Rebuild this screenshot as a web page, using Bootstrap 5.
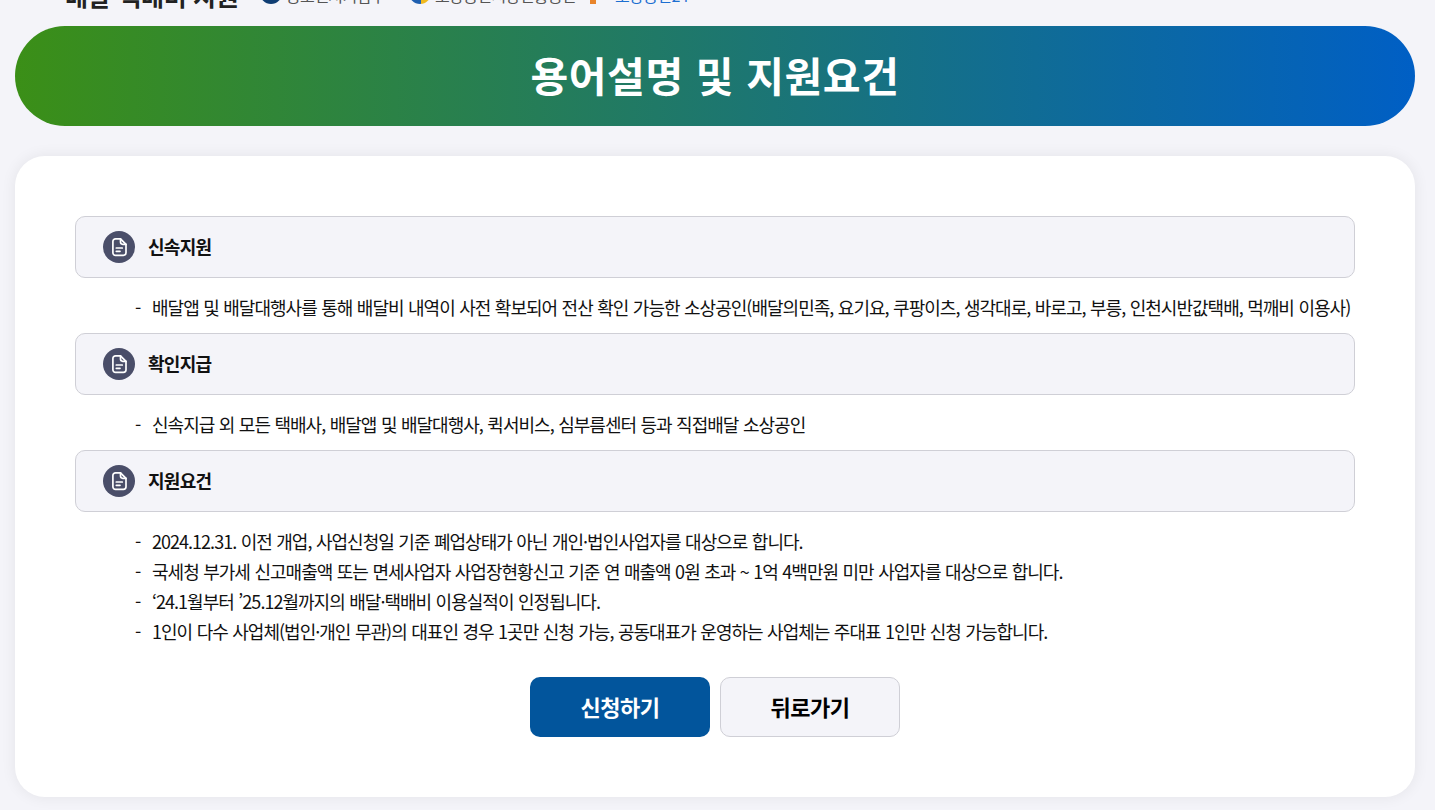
<!DOCTYPE html>
<html lang="ko"><head><meta charset="utf-8">
<link href="https://cdn.jsdelivr.net/npm/bootstrap@5.3.0/dist/css/bootstrap.min.css" rel="stylesheet">
<style>
html,body{height:810px;overflow:hidden}
body{background:#f4f4f9;font-family:"Noto Sans CJK KR","Noto Sans",sans-serif;color:#111}
.top-strip{height:26px;overflow:hidden;padding-left:65px}
.top-inner{margin-top:-18px;height:26px}
.top-title{font-size:25px;font-weight:700;color:#222;line-height:26px;width:195px;flex:none;letter-spacing:-.3px}
.top-item{font-size:16px;color:#555;letter-spacing:-.6px;line-height:20px;gap:4px;flex:none;margin-top:-4px}
.top-text{padding-top:4px}
.top-one{width:149px}
.top-two{width:181px}
.top-dot{width:22px;height:22px;border-radius:50%;display:inline-block;flex:none}
.top-plus{flex:none;margin-left:-7px;margin-right:8px}
.top-link{color:#1d6fd1}
.hero{margin:0 20px 30px 15px;height:100px;padding-bottom:2px;border-radius:50px;background:linear-gradient(90deg,#3b8f17,#005fc5);color:#fff;font-size:41px;font-weight:700;letter-spacing:.6px}
.sheet{margin:0 20px 0 15px;height:641px;background:#fff;border-radius:30px;padding:60px;box-shadow:0 0 15px rgba(0,0,0,.07)}
.term-head{height:62px;background:#f4f4f9;border:1px solid #cfcfd6;border-radius:10px;padding-left:27px;gap:14px;font-size:18px;font-weight:700;letter-spacing:-.7px}
.term-label{margin-bottom:2px;margin-left:-1px}
.term-icon{width:32px;height:32px;border-radius:50%;background:#4a4e69}
.term-list{list-style:none;margin:0;padding:14px 0 11px 60px;font-size:18px;letter-spacing:-.98px;word-spacing:.4px;line-height:30px;white-space:nowrap}
.term-list li{display:flex}
.term-list li::before{content:"-";width:17px;flex:none}
.act-row{margin-top:20px;column-gap:10px}
.act-btn{width:180px;height:60px;border-radius:10px;font-size:22px;font-weight:700;letter-spacing:-.45px;display:flex;align-items:center;justify-content:center;padding:0 0 2px}
.act-main{background:#02559c;color:#fff;border:0}
.act-back{background:#f4f4f9;color:#000;border:1px solid #cfcfd6}
</style></head><body>
<div class="top-strip"><div class="top-inner d-flex align-items-center">
<span class="top-title">배달·택배비 지원</span>
<span class="top-item top-one d-flex align-items-center"><i class="top-dot" style="background:#0f3d73"></i><span class="top-text">중소벤처기업부</span></span>
<span class="top-item top-two d-flex align-items-center"><i class="top-dot" style="background:linear-gradient(90deg,#1f5fb0 55%,#f0b91e 55%)"></i><span class="top-text">소상공인시장진흥공단</span></span>
<span class="top-item d-flex align-items-center"><svg class="top-plus" width="20" height="22" viewBox="0 0 20 22"><path fill="#e8842b" d="M7 0h6v6h7v7h-7v9H7v-9H0V6h7z"/></svg><span class="top-link top-text">소상공인24</span></span>
</div></div>
<div class="hero d-flex align-items-center justify-content-center">용어설명 및 지원요건</div>
<div class="sheet">
<div class="term-head d-flex align-items-center"><span class="term-icon d-flex align-items-center justify-content-center"><svg width="20" height="20" viewBox="0 0 20 20" fill="none" stroke="#fff" stroke-width="1.700" stroke-linecap="round" stroke-linejoin="round"><path d="M6.500 1.800h5L17 7.300v8.400a2.600 2.600 0 0 1-2.600 2.600H6.500a2.600 2.600 0 0 1-2.600-2.600V4.400a2.600 2.600 0 0 1 2.600-2.600Z"/><path d="M11.500 1.800v3.300a2.200 2.200 0 0 0 2.200 2.200H17M7.300 11h6M7.300 14.300h3.700"/></svg></span><span class="term-label">신속지원</span></div>
<ul class="term-list"><li>배달앱 및 배달대행사를 통해 배달비 내역이 사전 확보되어 전산 확인 가능한 소상공인(배달의민족, 요기요, 쿠팡이츠, 생각대로, 바로고, 부릉, 인천시반값택배, 먹깨비 이용사)</li></ul>
<div class="term-head d-flex align-items-center"><span class="term-icon d-flex align-items-center justify-content-center"><svg width="20" height="20" viewBox="0 0 20 20" fill="none" stroke="#fff" stroke-width="1.700" stroke-linecap="round" stroke-linejoin="round"><path d="M6.500 1.800h5L17 7.300v8.400a2.600 2.600 0 0 1-2.600 2.600H6.500a2.600 2.600 0 0 1-2.600-2.600V4.400a2.600 2.600 0 0 1 2.600-2.600Z"/><path d="M11.500 1.800v3.300a2.200 2.200 0 0 0 2.200 2.200H17M7.300 11h6M7.300 14.300h3.700"/></svg></span><span class="term-label">확인지급</span></div>
<ul class="term-list"><li>신속지급 외 모든 택배사, 배달앱 및 배달대행사, 퀵서비스, 심부름센터 등과 직접배달 소상공인</li></ul>
<div class="term-head d-flex align-items-center"><span class="term-icon d-flex align-items-center justify-content-center"><svg width="20" height="20" viewBox="0 0 20 20" fill="none" stroke="#fff" stroke-width="1.700" stroke-linecap="round" stroke-linejoin="round"><path d="M6.500 1.800h5L17 7.300v8.400a2.600 2.600 0 0 1-2.600 2.600H6.500a2.600 2.600 0 0 1-2.600-2.600V4.400a2.600 2.600 0 0 1 2.600-2.600Z"/><path d="M11.500 1.800v3.300a2.200 2.200 0 0 0 2.200 2.200H17M7.300 11h6M7.300 14.300h3.700"/></svg></span><span class="term-label">지원요건</span></div>
<ul class="term-list">
<li>2024.12.31. 이전 개업, 사업신청일 기준 폐업상태가 아닌 개인·법인사업자를 대상으로 합니다.</li>
<li>국세청 부가세 신고매출액 또는 면세사업자 사업장현황신고 기준 연 매출액 0원 초과 ~ 1억 4백만원 미만 사업자를 대상으로 합니다.</li>
<li>‘24.1월부터 ’25.12월까지의 배달·택배비 이용실적이 인정됩니다.</li>
<li>1인이 다수 사업체(법인·개인 무관)의 대표인 경우 1곳만 신청 가능, 공동대표가 운영하는 사업체는 주대표 1인만 신청 가능합니다.</li>
</ul>
<div class="act-row d-flex justify-content-center">
<button class="act-btn act-main">신청하기</button><button class="act-btn act-back">뒤로가기</button>
</div>
</div>
<script src="https://cdn.jsdelivr.net/npm/bootstrap@5.3.0/dist/js/bootstrap.bundle.min.js"></script>
</body></html>
